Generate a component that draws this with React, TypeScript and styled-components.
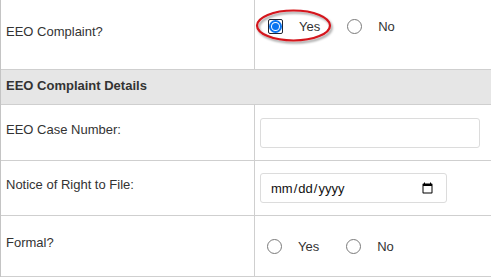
import React from "react";
import styled, { createGlobalStyle } from "styled-components";

const Global = createGlobalStyle`
  html, body { margin: 0; padding: 0; background: #fff; }
  body { font-family: "Liberation Sans", Arial, sans-serif; font-size: 13px; color: #333; }
`;

const Table = styled.div`
  display: grid;
  grid-template-columns: 254px 1fr;
  width: 491px;
  border-left: 1px solid #c4c4c4;
  box-sizing: border-box;
`;

const Label = styled.div<{ $h: number }>`
  border-bottom: 1px solid #cfcfcf;
  border-right: 1px solid #cfcfcf;
  display: flex;
  align-items: center;
  padding: 0 0 7px 5px;
  box-sizing: content-box;
  height: ${(p) => p.$h - 7}px;
  color: #333;
`;

const Value = styled.div<{ $h: number; $top?: number }>`
  border-bottom: 1px solid #cfcfcf;
  display: flex;
  align-items: ${(p) => (p.$top !== undefined ? "flex-start" : "center")};
  padding: ${(p) => (p.$top !== undefined ? `${p.$top}px 0 0 5px` : "0 0 0 5px")};
  height: ${(p) => p.$h - (p.$top ?? 0)}px;
  box-sizing: content-box;
  position: relative;
`;

const Header = styled.div`
  grid-column: 1 / span 2;
  height: 35px;
  background: #e6e6e6;
  border-bottom: 1px solid #cfcfcf;
  display: flex;
  align-items: center;
  padding-left: 5px;
  padding-bottom: 4px;
  box-sizing: border-box;
  font-weight: bold;
  color: #333;
`;

const RadioGroup = styled.div`
  display: flex;
  align-items: center;
  padding-left: 7px;
`;

const Option = styled.label`
  display: flex;
  align-items: center;
  margin-right: 27px;
  color: #333;
`;

const Circle = styled.span<{ $checked?: boolean; $size?: number }>`
  width: ${(p) => p.$size ?? 15}px;
  height: ${(p) => p.$size ?? 15}px;
  box-sizing: border-box;
  border-radius: 50%;
  border: ${(p) => (p.$checked ? "2px solid #0a74f0" : "1px solid #7a7a7a")};
  background: #fff;
  display: inline-flex;
  align-items: center;
  justify-content: center;
  margin-right: 16px;
  &::after {
    content: "";
    display: ${(p) => (p.$checked ? "block" : "none")};
    width: 7px;
    height: 7px;
    border-radius: 50%;
    background: #0a74f0;
  }
`;

const FocusBox = styled.span`
  display: inline-flex;
  width: 15px;
  height: 15px;
  box-sizing: border-box;
  align-items: center;
  justify-content: center;
  border: 1px solid #1f2533;
  border-radius: 2px;
  margin-left: 1px;
  margin-right: 16px;
  & > span { margin-right: 0; }
`;

const TextInput = styled.input`
  width: 220px;
  height: 30px;
  box-sizing: border-box;
  border: 1px solid #dcdcdc;
  border-radius: 3px;
  font-family: "Liberation Sans", Arial, sans-serif;
  font-size: 13px;
  padding: 0 8px;
  outline: none;
`;

const DateInput = styled.input`
  width: 187px;
  height: 30px;
  box-sizing: border-box;
  border: 1px solid #dcdcdc;
  border-radius: 3px;
  font-family: "Liberation Sans", Arial, sans-serif;
  font-size: 13px;
  color: #111;
  padding: 0 10px 0 9px;
  outline: none;
  background: #fff;
`;

const Ring = styled.svg`
  position: absolute;
  left: 1px;
  top: 9px;
  overflow: visible;
  pointer-events: none;
`;

export default function App() {
  return (
    <>
      <Global />
      <Table>
        <Label $h={69}>EEO Complaint?</Label>
        <Value $h={69} $top={19}>
          <RadioGroup>
            <Option>
              <FocusBox>
                <Circle $checked $size={13} />
              </FocusBox>
              Yes
            </Option>
            <Option>
              <Circle />
              No
            </Option>
          </RadioGroup>
          <Ring width="78" height="34" viewBox="0 0 78 34">
            <defs>
              <filter id="sh" x="-20%" y="-30%" width="140%" height="170%">
                <feDropShadow dx="1.5" dy="2" stdDeviation="1.2" floodColor="#000" floodOpacity="0.4" />
              </filter>
            </defs>
            <ellipse cx="37.5" cy="16.5" rx="36.5" ry="15" fill="none" stroke="#d4141c" strokeWidth="2.2" filter="url(#sh)" />
          </Ring>
        </Value>
        <Header>EEO Complaint Details</Header>
        <Label $h={55}>EEO Case Number:</Label>
        <Value $h={55}>
          <TextInput type="text" />
        </Value>
        <Label $h={54}>Notice of Right to File:</Label>
        <Value $h={54}>
          <DateInput type="date" />
        </Value>
        <Label $h={60}>Formal?</Label>
        <Value $h={60}>
          <RadioGroup>
            <Option>
              <Circle />
              Yes
            </Option>
            <Option>
              <Circle />
              No
            </Option>
          </RadioGroup>
        </Value>
      </Table>
    </>
  );
}
